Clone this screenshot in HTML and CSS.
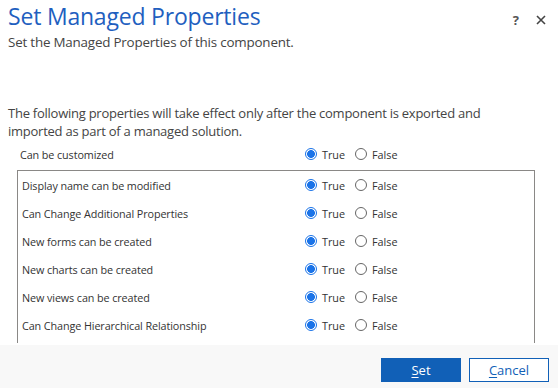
FILE: index.html
```html
<!DOCTYPE html>
<html lang="en">
<head>
    <meta charset="UTF-8">
    <meta name="viewport" content="width=device-width, initial-scale=1.0">
    <title>Set Managed Properties</title>
    <link rel="stylesheet" href="styles.css">
</head>
<body>
    <div class="dialog">
        <header class="dialog-header">
            <div class="titles">
                <h1 class="title">Set Managed Properties</h1>
                <p class="subtitle">Set the Managed Properties of this component.</p>
            </div>
            <div class="header-icons">
                <span class="help">?</span>
                <svg class="close" width="10" height="10" viewBox="0 0 10 10">
                    <path d="M1 1 L9 9 M9 1 L1 9" stroke="#444" stroke-width="1.6" fill="none"/>
                </svg>
            </div>
        </header>

        <div class="dialog-body">
            <p class="note">The following properties will take effect only after the component is exported and imported as part of a managed solution.</p>

            <div class="prop-row top-row">
                <span class="prop-label">Can be customized</span>
                <span class="choice"><span class="radio checked"></span>True</span>
                <span class="choice"><span class="radio"></span>False</span>
            </div>

            <div class="prop-box">
                <div class="prop-row">
                    <span class="prop-label">Display name can be modified</span>
                    <span class="choice"><span class="radio checked"></span>True</span>
                    <span class="choice"><span class="radio"></span>False</span>
                </div>
                <div class="prop-row">
                    <span class="prop-label">Can Change Additional Properties</span>
                    <span class="choice"><span class="radio checked"></span>True</span>
                    <span class="choice"><span class="radio"></span>False</span>
                </div>
                <div class="prop-row">
                    <span class="prop-label">New forms can be created</span>
                    <span class="choice"><span class="radio checked"></span>True</span>
                    <span class="choice"><span class="radio"></span>False</span>
                </div>
                <div class="prop-row">
                    <span class="prop-label">New charts can be created</span>
                    <span class="choice"><span class="radio checked"></span>True</span>
                    <span class="choice"><span class="radio"></span>False</span>
                </div>
                <div class="prop-row">
                    <span class="prop-label">New views can be created</span>
                    <span class="choice"><span class="radio checked"></span>True</span>
                    <span class="choice"><span class="radio"></span>False</span>
                </div>
                <div class="prop-row">
                    <span class="prop-label">Can Change Hierarchical Relationship</span>
                    <span class="choice"><span class="radio checked"></span>True</span>
                    <span class="choice"><span class="radio"></span>False</span>
                </div>
            </div>
        </div>

        <footer class="dialog-footer">
            <button class="btn primary"><u>S</u>et</button>
            <button class="btn secondary"><u>C</u>ancel</button>
        </footer>
    </div>
</body>
</html>
```

FILE: styles.css
```css
* {
    margin: 0;
    padding: 0;
    box-sizing: border-box;
}

body {
    font-family: "Open Sans", "Noto Sans", sans-serif;
    background: white;
    color: #333;
}

.dialog {
    width: 558px;
    height: 388px;
    display: flex;
    flex-direction: column;
    overflow: hidden;
}

.dialog-header {
    display: flex;
    justify-content: space-between;
    padding: 1px 12px 0 8px;
}

.title {
    font-size: 23px;
    font-weight: normal;
    color: #1f5fbf;
    line-height: 31px;
    letter-spacing: -0.2px;
}

.subtitle {
    font-size: 13.4px;
    line-height: 20px;
    color: #444;
    letter-spacing: -0.2px;
}

.header-icons {
    display: flex;
    align-items: center;
    gap: 17px;
    height: 38px;
}

.help {
    font-size: 13px;
    font-weight: bold;
    color: #555;
}

.close {
    display: block;
}

.dialog-body {
    flex: 1;
    display: flex;
    flex-direction: column;
    padding: 52px 23px 2px 8px;
    min-height: 0;
}

.note {
    font-size: 13px;
    line-height: 18px;
    color: #444;
    letter-spacing: -0.25px;
}

.prop-row {
    display: flex;
    align-items: center;
    height: 28px;
    font-size: 10.8px;
    color: #333;
}

.top-row {
    margin: 0 0 2px;
    padding-left: 12px;
}

.prop-label {
    width: 285px;
    letter-spacing: -0.1px;
}

.prop-box {
    flex: 1;
    border: 1px solid #8a8886;
    border-bottom: none;
    margin-left: 9px;
    padding: 0 0 0 4px;
    overflow: hidden;
}

.prop-box .prop-label {
    width: 283px;
}

.choice {
    display: flex;
    align-items: center;
    gap: 5px;
    width: 50px;
}

.radio {
    width: 12px;
    height: 12px;
    border: 1px solid #666;
    border-radius: 50%;
    background: white;
}

.radio.checked {
    border-color: #1a73e8;
    background: radial-gradient(circle, #1a73e8 3.6px, white 4.2px);
}

.dialog-footer {
    height: 43px;
    background-color: #f8f8f8;
    display: flex;
    justify-content: flex-end;
    align-items: flex-start;
    gap: 8px;
    padding: 13px 9px 0 0;
}

.btn {
    width: 80px;
    height: 24px;
    font-family: "Open Sans", "Noto Sans", sans-serif;
    font-size: 13px;
    border: 1px solid #1160b7;
    cursor: pointer;
}

.btn u {
    text-underline-offset: 2px;
}

.primary {
    background-color: #1160b7;
    color: white;
}

.secondary {
    background-color: white;
    color: #1160b7;
}
```
